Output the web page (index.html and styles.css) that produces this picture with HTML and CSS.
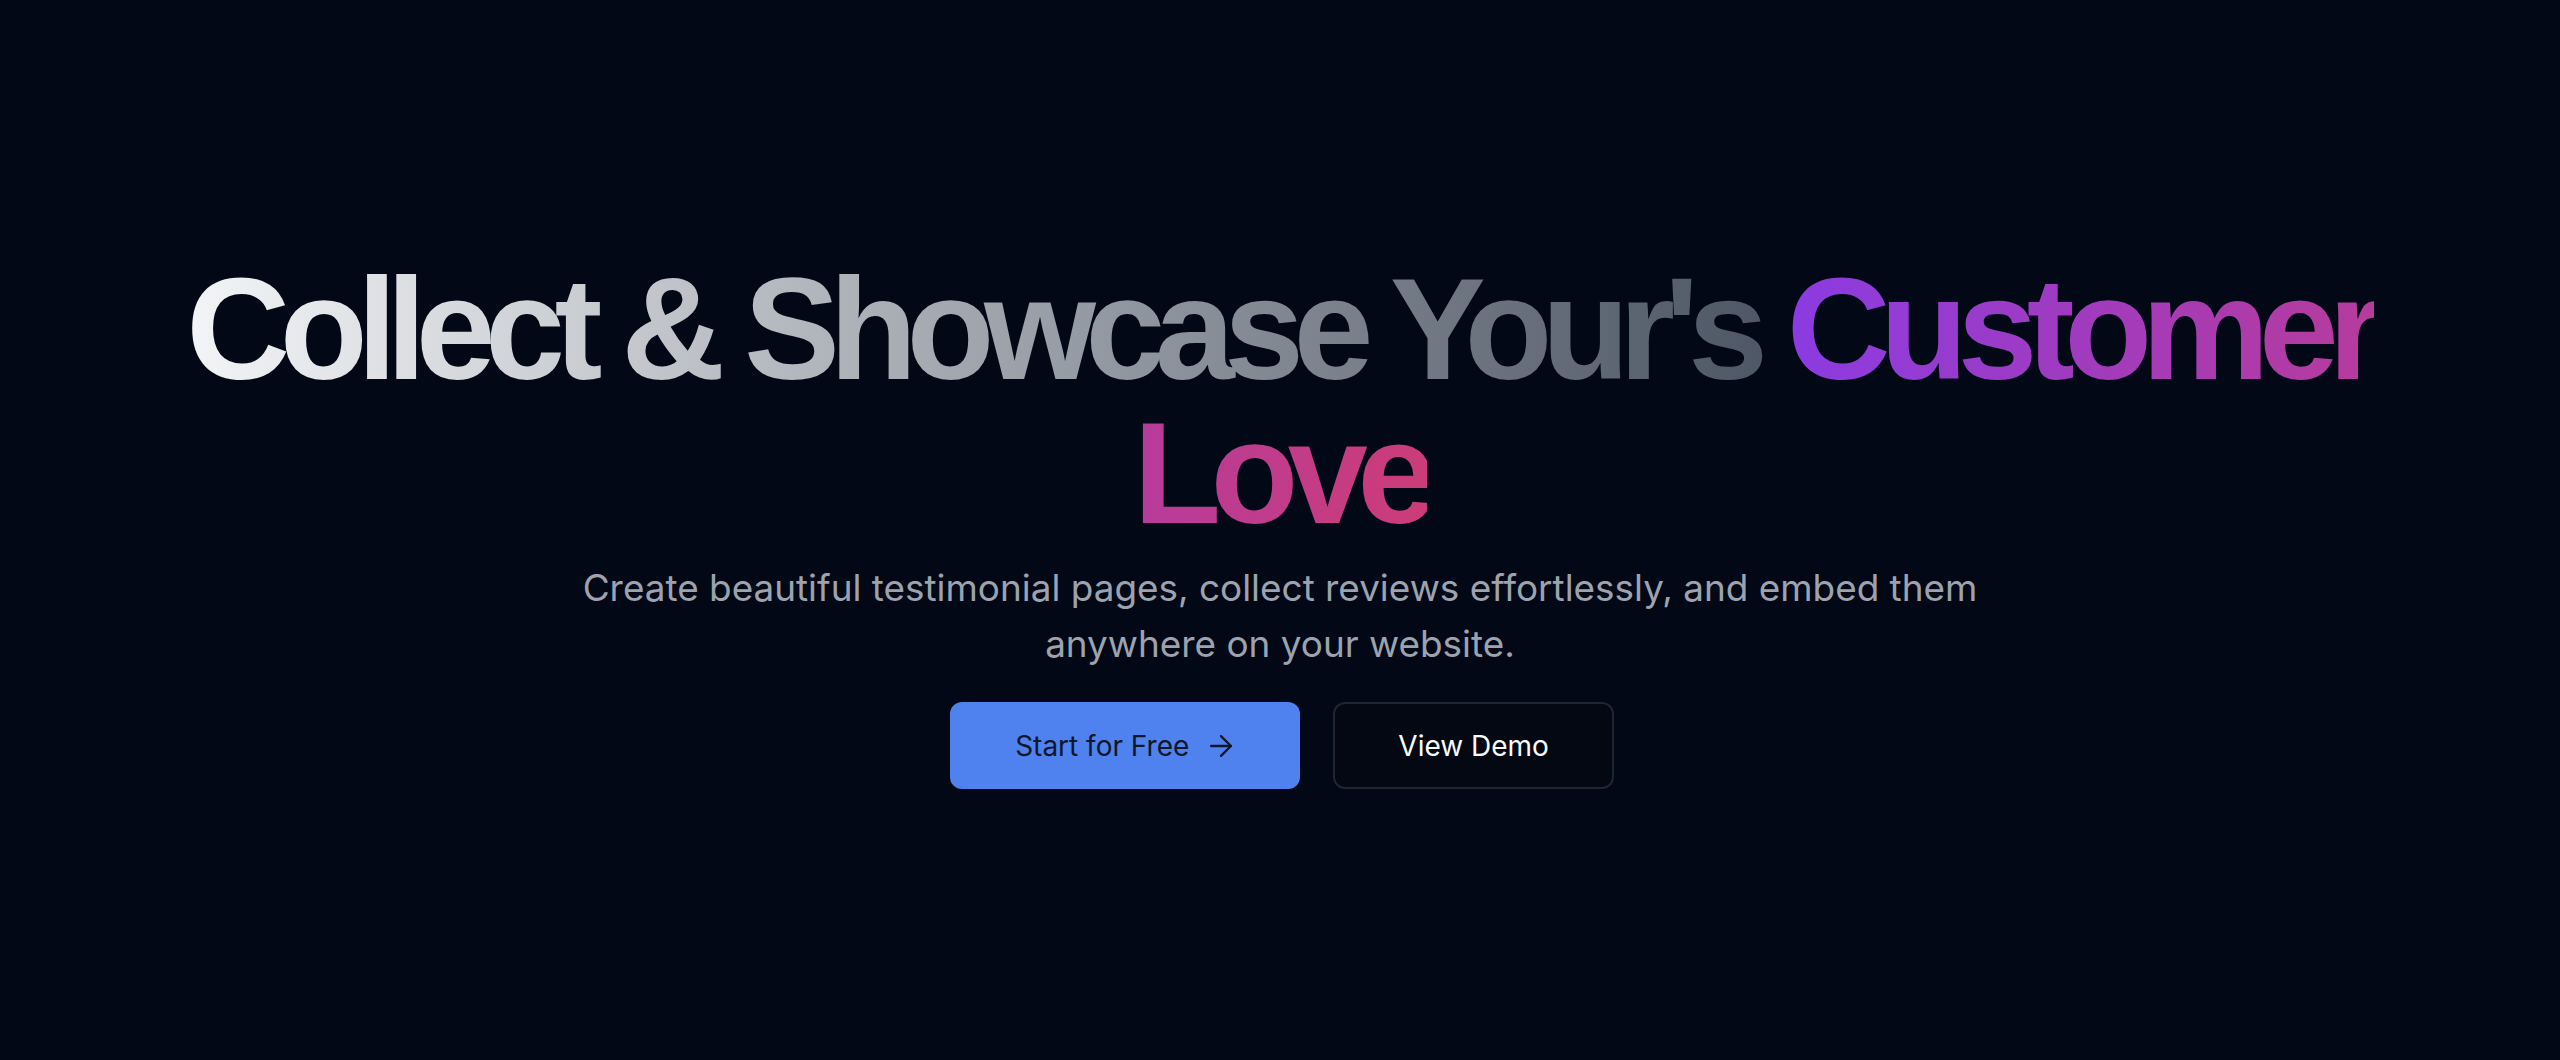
FILE: index.html
```html
<!DOCTYPE html>
<html lang="en">
<head>
<meta charset="utf-8">
<title>Collect &amp; Showcase</title>
<link rel="stylesheet" href="styles.css">
</head>
<body>
<main class="hero">
  <h1 class="hero-title"><span class="title-gray">Collect &amp; Showcase Your's </span><span class="title-color">Customer Love</span></h1>
  <p class="hero-sub">Create beautiful testimonial pages, collect reviews effortlessly, and embed them anywhere on your website.</p>
  <div class="hero-actions">
    <a class="btn btn-primary" href="#">Start for Free
      <svg class="btn-icon" viewBox="0 0 24 24" fill="none" stroke="currentColor" stroke-width="1.6" stroke-linecap="round" stroke-linejoin="round"><path d="M5 12h14"/><path d="m12 5 7 7-7 7"/></svg>
    </a>
    <a class="btn btn-outline" href="#">View Demo</a>
  </div>
</main>
</body>
</html>
```
FILE: styles.css
```css
* { box-sizing: border-box; }
html, body { margin: 0; padding: 0; }
body {
  background: #020816;
  font-family: Inter, "Noto Sans", sans-serif;
  color: #f3f4f6;
}
.hero {
  min-height: 1060px;
  display: flex;
  flex-direction: column;
  align-items: center;
  justify-content: center;
  padding-bottom: 13px;
  text-align: center;
}
.hero-title {
  margin: 0;
  max-width: 2300px;
  font-family: "Liberation Sans", Arial, sans-serif;
  font-weight: 700;
  font-size: 144px;
  line-height: 144px;
  letter-spacing: -0.074em;
}
.title-gray {
  background: linear-gradient(to right, #f3f4f6, #4b5563);
  -webkit-background-clip: text;
  background-clip: text;
  color: transparent;
}
.title-color {
  background: linear-gradient(to right, #8b3be2, #cc3c78);
  -webkit-background-clip: text;
  background-clip: text;
  color: transparent;
}
.hero-sub {
  margin: 14px 0 0;
  max-width: 1460px;
  font-size: 36.9px;
  line-height: 56px;
  color: #9ca3af;
}
.hero-actions {
  margin-top: 30px;
  display: flex;
  gap: 33px;
  padding-left: 4px;
}
.btn {
  display: inline-flex;
  align-items: center;
  justify-content: center;
  height: 87px;
  padding: 0 63px;
  border-radius: 12px;
  font-size: 28px;
  font-weight: 400;
  text-decoration: none;
}
.btn-primary {
  background: #4f82ee;
  color: #0f172a;
  gap: 15px;
  padding: 0 62px 0 65px;
}
.btn-icon { width: 34px; height: 34px; }
.btn-outline {
  border: 2px solid #1e2533;
  background: #030813;
  color: #f9fafb;
}
```
